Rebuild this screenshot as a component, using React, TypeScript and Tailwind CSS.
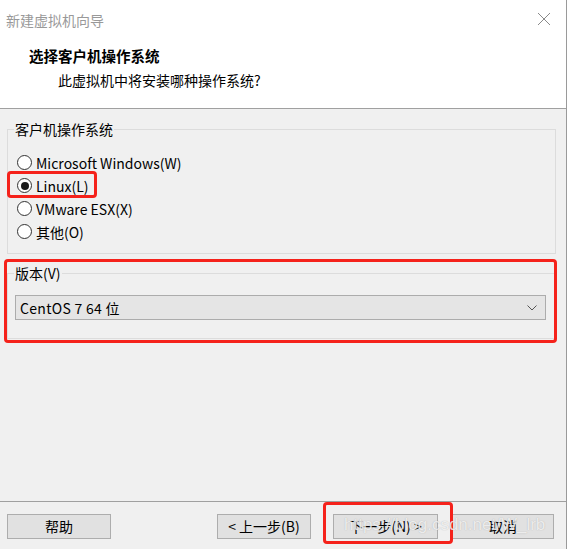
import React from "react";

const FONT = { fontFamily: '"Noto Sans CJK SC", "Noto Sans", sans-serif' };

function Radio({ label, checked }: { label: string; checked?: boolean }) {
  return (
    <div className="flex h-[23px] items-center">
      <span className="ml-[9px] flex h-[15px] w-[15px] items-center justify-center rounded-full border border-[#333333] bg-white">
        {checked && <span className="h-[8px] w-[8px] rounded-full bg-[#1a1a1a]" />}
      </span>
      <span className="ml-[4px] text-[14px] leading-[20px] text-black">{label}</span>
    </div>
  );
}

function Button({ label, className }: { label: string; className: string }) {
  return (
    <div
      className={
        "flex h-[25px] items-center justify-center border border-[#adadad] bg-[#e1e1e1] text-[14px] text-black " +
        className
      }
    >
      {label}
    </div>
  );
}

export default function App() {
  return (
    <div
      className="relative flex h-[549px] w-[567px] flex-col overflow-hidden border-r border-[#9a9a9a] bg-[#f0f0f0]"
      style={FONT}
    >
      {/* header */}
      <div className="flex h-[109px] flex-col border-b border-[#a0a0a0] bg-white">
        <div className="flex h-[20px] items-center justify-between pl-[6px] pr-[15px] mt-[10px]">
          <span className="text-[14px] leading-[20px] text-[#999999]">新建虚拟机向导</span>
          <svg width="14" height="14" viewBox="0 0 14 14" className="mt-[-2px]">
            <path d="M1 1 L13 13 M13 1 L1 13" stroke="#8a8a8a" strokeWidth="1" fill="none" />
          </svg>
        </div>
        <div className="mt-[16px] pl-[29px] text-[14.5px] font-bold leading-[20px] text-black">选择客户机操作系统</div>
        <div className="mt-[4px] pl-[58px] text-[14px] leading-[20px] text-black">此虚拟机中将安装哪种操作系统?</div>
      </div>

      {/* group 1 */}
      <fieldset className="mx-[7px] mt-[10px] w-[549px] border border-[#dcdcdc] pl-[6px] pb-[10px]">
        <legend className="px-[1px] text-[14px] leading-[20px] text-black">客户机操作系统</legend>
        <div className="-ml-[6px] flex flex-col pt-[12px]">
          <Radio label="Microsoft Windows(W)" />
          <Radio label="Linux(L)" checked />
          <Radio label="VMware ESX(X)" />
          <Radio label="其他(O)" />
        </div>
      </fieldset>

      {/* group 2 */}
      <fieldset className="mx-[7px] mt-[9px] w-[549px] border border-[#dcdcdc] pl-[6px] pb-[18px]">
        <legend className="px-[1px] text-[14px] leading-[20px] text-black">版本(V)</legend>
        <div className="-ml-[6px] mt-[12px] flex h-[25px] w-[531px] ml-[1px] items-center justify-between border border-[#acacac] bg-[#e5e5e5] pl-[4px] pr-[8px]">
          <span className="text-[14px] leading-[20px] text-black tracking-[0.3px]">CentOS 7 64 位</span>
          <svg width="10" height="6" viewBox="0 0 10 6">
            <path d="M0.5 0.5 L5 5 L9.5 0.5" stroke="#555555" strokeWidth="1" fill="none" />
          </svg>
        </div>
      </fieldset>

      <div className="flex-1" />

      {/* footer */}
      <div className="flex border-t border-[#a0a0a0] pt-[12px] pb-[10px]">
        <Button label="帮助" className="ml-[7px] w-[104px]" />
        <Button label="< 上一步(B)" className="ml-[106px] w-[94px]" />
        <Button label="下一步(N) >" className="ml-[22px] w-[105px]" />
        <Button label="取消" className="ml-[14px] w-[102px]" />
      </div>

      {/* annotation overlays */}
      <div className="pointer-events-none absolute left-[7px] top-[171px] h-[27px] w-[90px] rounded-[4px] border-[3px] border-[#f5221b]" />
      <div className="pointer-events-none absolute left-[4px] top-[259px] h-[84px] w-[553px] rounded-[4px] border-[3px] border-[#f5221b]" />
      <div className="pointer-events-none absolute left-[323px] top-[502px] h-[42px] w-[130px] rounded-[4px] border-[3px] border-[#f5221b]" />

      {/* watermark */}
      <div
        className="pointer-events-none absolute left-[344px] top-[514px] text-[17px] leading-[22px] text-white/75"
        style={{ fontFamily: '"Liberation Sans", Arial, sans-serif', textShadow: "0 0 1px rgba(120,120,120,0.5)" }}
      >
        https://blog.csdn.net/W_lrb
      </div>
    </div>
  );
}
